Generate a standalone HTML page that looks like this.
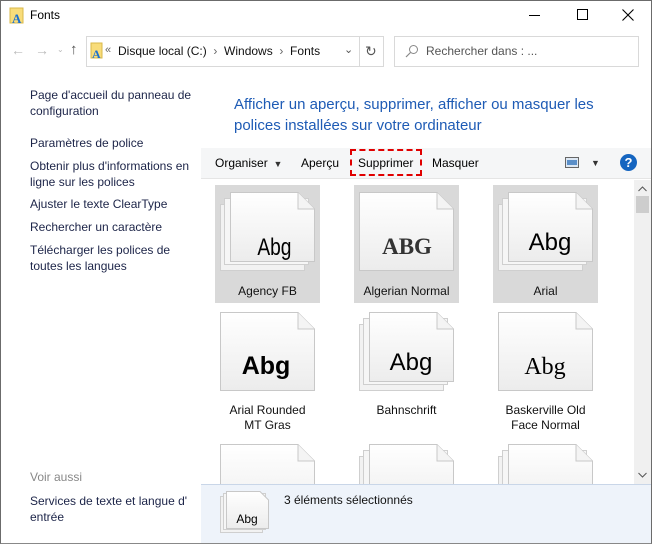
<!DOCTYPE html><html><head><meta charset="utf-8"><style>
*{margin:0;padding:0;box-sizing:border-box}
body{width:652px;height:544px;overflow:hidden;background:#fff;font-family:"Liberation Sans",sans-serif;font-size:12px;color:#000;position:relative}
.a{position:absolute}
.lk{color:#1c2448;font-size:12px;line-height:16px}
.tile{position:absolute;width:105px}
.sel{background:#d9d9d9}
.lbl{position:absolute;left:0;width:105px;text-align:center;font-size:12px;line-height:15px;color:#111}
</style></head><body>
<div class="a" style="left:0;top:0;width:652px;height:544px;border:1px solid #6b6b6b;border-bottom:1px solid #888"></div>
<svg class="a" style="left:9px;top:7px" width="16" height="18"><rect x="1" y="1" width="13" height="15" fill="#f8dc7a" stroke="#d9b84a"/><text x="3" y="16" font-size="13" fill="#1a6fd0" font-family="Liberation Serif" font-weight="bold">A</text></svg>
<div class="a" style="left:30px;top:8px;font-size:12px">Fonts</div>
<div class="a" style="left:529px;top:15px;width:11px;height:1px;background:#000"></div>
<div class="a" style="left:577px;top:9px;width:11px;height:11px;border:1px solid #000"></div>
<svg class="a" style="left:622px;top:9px" width="12" height="12"><path d="M0.5 0.5L11.5 11.5M11.5 0.5L0.5 11.5" stroke="#000" stroke-width="1.1"/></svg>
<div class="a" style="left:11px;top:42px;color:#bbb;font-size:14px">←</div>
<div class="a" style="left:35px;top:42px;color:#bbb;font-size:14px">→</div>
<div class="a" style="left:57px;top:45px;color:#bbb;font-size:8px">⌄</div>
<div class="a" style="left:70px;top:41px;color:#555;font-size:15px">↑</div>
<div class="a" style="left:86px;top:36px;width:298px;height:31px;border:1px solid #d9d9d9"></div>
<div class="a" style="left:359px;top:37px;width:1px;height:29px;background:#d9d9d9"></div>
<svg class="a" style="left:90px;top:42px" width="14" height="18"><rect x="1" y="1" width="11" height="15" fill="#f8dc7a" stroke="#d9b84a"/><text x="2" y="16" font-size="12" fill="#1a6fd0" font-family="Liberation Serif" font-weight="bold">A</text></svg>
<div class="a" style="left:105px;top:44px;color:#666;font-size:11px">«</div>
<div class="a" style="left:118px;top:44px;font-size:12px;color:#111">Disque local (C:)&nbsp;&nbsp;<span style="color:#666">›</span>&nbsp;&nbsp;Windows&nbsp;&nbsp;<span style="color:#666">›</span>&nbsp;&nbsp;Fonts</div>
<div class="a" style="left:344px;top:43px;color:#555;font-size:11px">⌄</div>
<div class="a" style="left:365px;top:43px;color:#555;font-size:14px">↻</div>
<div class="a" style="left:394px;top:36px;width:245px;height:31px;border:1px solid #d9d9d9"></div>
<svg class="a" style="left:405px;top:44px" width="14" height="14"><circle cx="8.5" cy="5.5" r="4" fill="none" stroke="#888"/><path d="M5.5 8.5L1 13" stroke="#888" stroke-width="1.2"/></svg>
<div class="a" style="left:426px;top:44px;color:#555;font-size:12px">Rechercher dans : ...</div>
<div class="a lk" style="left:30px;top:87px">Page d'accueil du panneau de<br>configuration</div>
<div class="a lk" style="left:30px;top:135px">Paramètres de police</div>
<div class="a lk" style="left:30px;top:158px">Obtenir plus d'informations en<br>ligne sur les polices</div>
<div class="a lk" style="left:30px;top:196px">Ajuster le texte ClearType</div>
<div class="a lk" style="left:30px;top:219px">Rechercher un caractère</div>
<div class="a lk" style="left:30px;top:242px">Télécharger les polices de<br>toutes les langues</div>
<div class="a" style="left:30px;top:470px;color:#888;font-size:12px">Voir aussi</div>
<div class="a lk" style="left:30px;top:493px">Services de texte et langue d'<br>entrée</div>
<div class="a" style="left:234px;top:94px;color:#1e5bb5;font-size:15px;line-height:21px">Afficher un aperçu, supprimer, afficher ou masquer les<br>polices installées sur votre ordinateur</div>
<div class="a" style="left:201px;top:148px;width:450px;height:31px;background:#f5f6f7;border-bottom:1px solid #e5e5e5"></div>
<div class="a" style="left:215px;top:156px">Organiser <span style="font-size:9px;color:#333">&nbsp;▼</span></div>
<div class="a" style="left:301px;top:156px">Aperçu</div>
<div class="a" style="left:350px;top:149px;width:72px;height:27px;border:2px dashed #e00000"></div>
<div class="a" style="left:358px;top:156px">Supprimer</div>
<div class="a" style="left:432px;top:156px">Masquer</div>
<svg class="a" style="left:565px;top:157px" width="14" height="11"><rect x="0.5" y="0.5" width="13" height="10" fill="#dde8f4" stroke="#666"/><rect x="2" y="3" width="10" height="5" fill="#5b8fc8"/></svg>
<div class="a" style="left:591px;top:158px;font-size:9px;color:#333">▼</div>
<div class="a" style="left:620px;top:154px;width:17px;height:17px;border-radius:50%;background:#1565c0;color:#fff;font-weight:bold;font-size:13px;text-align:center;line-height:17px">?</div>
<div class="a" style="left:634px;top:180px;width:17px;height:304px;background:#f0f0f0"></div>
<div class="a" style="left:636px;top:196px;width:13px;height:17px;background:#cdcdcd"></div>
<svg class="a" style="left:638px;top:186px" width="9" height="6"><path d="M0.5 5L4.5 1L8.5 5" fill="none" stroke="#555"/></svg>
<svg class="a" style="left:638px;top:472px" width="9" height="6"><path d="M0.5 1L4.5 5L8.5 1" fill="none" stroke="#555"/></svg>
<svg width="0" height="0" style="position:absolute"><defs>
<linearGradient id="g" x1="0" y1="0" x2="0" y2="1"><stop offset="0" stop-color="#fff"/><stop offset="1" stop-color="#ececec"/></linearGradient>
<g id="pg"><path d="M0.5 0.5H68L84.5 17V69.5H0.5Z" fill="url(#g)" stroke="#c8c8c8"/><path d="M68 0.5V17H84.5" fill="#f4f4f4" stroke="#c8c8c8"/></g>
<g id="pg1"><path d="M0.5 0.5H78L94.5 17V78.5H0.5Z" fill="url(#g)" stroke="#c8c8c8"/><path d="M78 0.5V17H94.5" fill="#f4f4f4" stroke="#c8c8c8"/></g>
<g id="stk"><rect x="0.5" y="12.5" width="84" height="66" fill="#f2f2f2" stroke="#cfcfcf"/><rect x="4.5" y="6.5" width="84" height="66" fill="#f6f6f6" stroke="#cfcfcf"/><use href="#pg" x="10"/></g>
</defs></svg>
<div class="tile sel" style="left:215px;top:185px;height:118px">
<svg class="a" style="left:5px;top:7px" width="96" height="80"><use href="#stk"/><text x="55" y="63" text-anchor="middle" font-size="24" font-family="Liberation Sans Narrow,Liberation Sans" transform="scale(0.8,1) translate(13,0)">Abg</text></svg>
<div class="lbl" style="top:99px">Agency FB</div></div>
<div class="tile sel" style="left:354px;top:185px;height:118px">
<svg class="a" style="left:5px;top:7px" width="96" height="80"><use href="#pg1"/><text x="48" y="62" text-anchor="middle" font-size="23" font-family="Liberation Serif" font-weight="bold" fill="#333">ABG</text></svg>
<div class="lbl" style="top:99px">Algerian Normal</div></div>
<div class="tile sel" style="left:493px;top:185px;height:118px">
<svg class="a" style="left:5px;top:7px" width="96" height="80"><use href="#stk"/><text x="52" y="58" text-anchor="middle" font-size="24" font-family="Liberation Sans">Abg</text></svg>
<div class="lbl" style="top:99px">Arial</div></div>
<div class="tile" style="left:215px;top:305px;height:130px">
<svg class="a" style="left:5px;top:7px" width="96" height="80"><use href="#pg1"/><text x="46" y="62" text-anchor="middle" font-size="25" font-weight="bold" font-family="Liberation Sans">Abg</text></svg>
<div class="lbl" style="top:98px">Arial Rounded<br>MT Gras</div></div>
<div class="tile" style="left:354px;top:305px;height:130px">
<svg class="a" style="left:5px;top:7px" width="96" height="80"><use href="#stk"/><text x="52" y="58" text-anchor="middle" font-size="24" font-family="Liberation Sans">Abg</text></svg>
<div class="lbl" style="top:98px">Bahnschrift</div></div>
<div class="tile" style="left:493px;top:305px;height:130px">
<svg class="a" style="left:5px;top:7px" width="96" height="80"><use href="#pg1"/><text x="47" y="62" text-anchor="middle" font-size="24" font-family="Liberation Serif">Abg</text></svg>
<div class="lbl" style="top:98px">Baskerville Old<br>Face Normal</div></div>
<div class="a" style="left:201px;top:440px;width:433px;height:44px;overflow:hidden">
<svg class="a" style="left:19px;top:4px" width="96" height="80"><use href="#pg1"/></svg>
<svg class="a" style="left:158px;top:4px" width="96" height="80"><use href="#stk"/></svg>
<svg class="a" style="left:297px;top:4px" width="96" height="80"><use href="#stk"/></svg>
</div>
<div class="a" style="left:201px;top:484px;width:450px;height:59px;background:#eef3fa;border-top:1px solid #c9d6e8"></div>
<svg class="a" style="left:220px;top:491px" width="50" height="43"><rect x="0.5" y="5.5" width="42" height="36" fill="#f2f2f2" stroke="#cfcfcf"/><rect x="3.5" y="2.5" width="42" height="36" fill="#f6f6f6" stroke="#cfcfcf"/><path d="M6.5 0.5H40L48.5 9V37.5H6.5Z" fill="url(#g)" stroke="#c8c8c8"/><text x="27" y="32" text-anchor="middle" font-size="12" font-family="Liberation Sans">Abg</text></svg>
<div class="a" style="left:284px;top:493px;font-size:12px;color:#111">3 éléments sélectionnés</div>
</body></html>
